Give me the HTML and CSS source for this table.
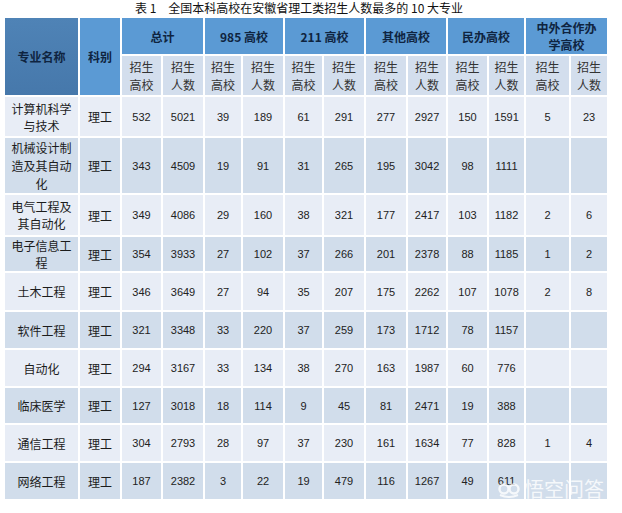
FILE: index.html
```html
<!DOCTYPE html>
<html lang="zh">
<head>
<meta charset="utf-8">
<link rel="stylesheet" href="styles.css">
</head>
<body>
<div class="page">
  <div class="title">表 1　全国本科高校在安徽省理工类招生人数最多的 10 大专业</div>
  <table class="data">
    <colgroup>
      <col class="c-name"><col class="c-kind">
      <col class="w39"><col class="w40">
      <col class="w36"><col class="w40">
      <col class="w37"><col class="w40">
      <col class="w40"><col class="w38">
      <col class="w39"><col class="w35">
      <col class="w43"><col class="w36">
    </colgroup>
    <thead>
      <tr class="hr1">
        <th rowspan="2" class="h-name">专业名称</th>
        <th rowspan="2" class="h-grp">科别</th>
        <th colspan="2" class="h-grp">总计</th>
        <th colspan="2" class="h-grp">985 高校</th>
        <th colspan="2" class="h-grp">211 高校</th>
        <th colspan="2" class="h-grp">其他高校</th>
        <th colspan="2" class="h-grp">民办高校</th>
        <th colspan="2" class="h-grp h-two">中外合作办学高校</th>
      </tr>
      <tr class="hr2">
        <th class="sub">招生<br>高校</th><th class="sub">招生<br>人数</th>
        <th class="sub">招生<br>高校</th><th class="sub">招生<br>人数</th>
        <th class="sub">招生<br>高校</th><th class="sub">招生<br>人数</th>
        <th class="sub">招生<br>高校</th><th class="sub">招生<br>人数</th>
        <th class="sub">招生<br>高校</th><th class="sub">招生<br>人数</th>
        <th class="sub">招生<br>高校</th><th class="sub">招生<br>人数</th>
      </tr>
    </thead>
    <tbody>
      <tr class="r1"><td class="name">计算机科学与技术</td><td class="kind">理工</td><td>532</td><td>5021</td><td>39</td><td>189</td><td>61</td><td>291</td><td>277</td><td>2927</td><td>150</td><td>1591</td><td>5</td><td>23</td></tr>
      <tr class="r2"><td class="name">机械设计制造及其自动化</td><td class="kind">理工</td><td>343</td><td>4509</td><td>19</td><td>91</td><td>31</td><td>265</td><td>195</td><td>3042</td><td>98</td><td>1111</td><td></td><td></td></tr>
      <tr class="r3"><td class="name">电气工程及其自动化</td><td class="kind">理工</td><td>349</td><td>4086</td><td>29</td><td>160</td><td>38</td><td>321</td><td>177</td><td>2417</td><td>103</td><td>1182</td><td>2</td><td>6</td></tr>
      <tr class="r4"><td class="name">电子信息工程</td><td class="kind">理工</td><td>354</td><td>3933</td><td>27</td><td>102</td><td>37</td><td>266</td><td>201</td><td>2378</td><td>88</td><td>1185</td><td>1</td><td>2</td></tr>
      <tr class="r5"><td class="name">土木工程</td><td class="kind">理工</td><td>346</td><td>3649</td><td>27</td><td>94</td><td>35</td><td>207</td><td>175</td><td>2262</td><td>107</td><td>1078</td><td>2</td><td>8</td></tr>
      <tr class="r6"><td class="name">软件工程</td><td class="kind">理工</td><td>321</td><td>3348</td><td>33</td><td>220</td><td>37</td><td>259</td><td>173</td><td>1712</td><td>78</td><td>1157</td><td></td><td></td></tr>
      <tr class="r7"><td class="name">自动化</td><td class="kind">理工</td><td>294</td><td>3167</td><td>33</td><td>134</td><td>38</td><td>270</td><td>163</td><td>1987</td><td>60</td><td>776</td><td></td><td></td></tr>
      <tr class="r8"><td class="name">临床医学</td><td class="kind">理工</td><td>127</td><td>3018</td><td>18</td><td>114</td><td>9</td><td>45</td><td>81</td><td>2471</td><td>19</td><td>388</td><td></td><td></td></tr>
      <tr class="r9"><td class="name">通信工程</td><td class="kind">理工</td><td>304</td><td>2793</td><td>28</td><td>97</td><td>37</td><td>230</td><td>161</td><td>1634</td><td>77</td><td>828</td><td>1</td><td>4</td></tr>
      <tr class="r10"><td class="name">网络工程</td><td class="kind">理工</td><td>187</td><td>2382</td><td>3</td><td>22</td><td>19</td><td>479</td><td>116</td><td>1267</td><td>49</td><td>611</td><td></td><td></td></tr>
    </tbody>
  </table>
  <div class="watermark">
    <svg class="wm-logo" width="22" height="18" viewBox="0 0 22 18">
      <circle cx="6" cy="9" r="4.5" fill="none" stroke="#fff" stroke-width="2.4"/>
      <circle cx="16" cy="9" r="4.5" fill="none" stroke="#fff" stroke-width="2.4"/>
      <path d="M2 15 Q11 19 20 15" fill="none" stroke="#fff" stroke-width="2"/>
    </svg>
    <span class="wm-text">悟空问答</span>
  </div>
</div>
</body>
</html>
```

FILE: styles.css
```css
* { box-sizing: border-box; }
html, body { margin: 0; padding: 0; background: #fff; }
body {
  font-family: "Noto Sans CJK SC", "Liberation Sans", sans-serif;
  color: #222;
}
.page {
  position: relative;
  width: 622px;
  height: 513px;
}
.title {
  height: 16px;
  line-height: 16px;
  font-size: 12px;
  text-align: center;
  padding-right: 24px;
  color: #111;
}
.data {
  margin-left: 3px;
  border-collapse: separate;
  border-spacing: 2px;
  table-layout: fixed;
  width: 606px;
}
.c-name { width: 73px; }
.c-kind { width: 40px; }
.w35 { width: 35px; }
.w36 { width: 36px; }
.w37 { width: 37px; }
.w38 { width: 38px; }
.w39 { width: 39px; }
.w40 { width: 40px; }
.w43 { width: 43px; }

th, td {
  padding: 0;
  text-align: center;
  vertical-align: middle;
}
th {
  font-size: 12px;
  font-weight: bold;
  color: #0f2440;
}
.h-name {
  background: linear-gradient(180deg, #4f83b6 0%, #4678ab 100%);
}
.h-grp {
  background: #5b9ad4;
}
.h-two {
  line-height: 17px;
  padding: 0 8px;
}
.hr1 th { height: 36px; }
.hr2 th { height: 39px; }
th.sub {
  background: #d3deed;
  font-weight: normal;
  color: #333;
  line-height: 18px;
}
td {
  font-family: "Liberation Sans", sans-serif;
  font-size: 11px;
  color: #222;
}
td.name, td.kind {
  font-family: "Noto Sans CJK SC", sans-serif;
  font-size: 12px;
  line-height: 17px;
  color: #1c1c1c;
}
td.name { padding: 0 4px; }
tbody tr:nth-child(odd) td { background: #e8edf6; }
tbody tr:nth-child(even) td { background: #d1ddeb; }
.r1 td { height: 39px; }
.r2 td { height: 55px; }
.r2 td.name { line-height: 18px; }
.r3 td { height: 40px; }
.r4 td { height: 34px; }
.r5 td { height: 37px; }
.r6 td { height: 36px; }
.r7 td { height: 36px; }
.r8 td { height: 35px; }
.r9 td { height: 36px; }
.r10 td { height: 36px; }

.watermark {
  position: absolute;
  left: 498px;
  top: 477px;
  display: flex;
  align-items: center;
  gap: 4px;
  opacity: 0.8;
}
.wm-logo { display: block; }
.wm-text {
  font-size: 20px;
  line-height: 24px;
  color: #fff;
}
```
